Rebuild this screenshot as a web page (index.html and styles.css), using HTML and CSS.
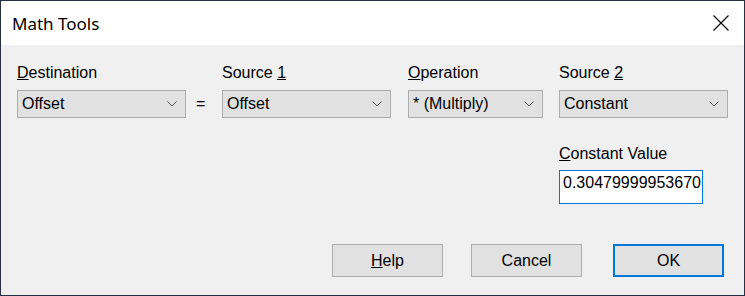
FILE: index.html
```html
<!DOCTYPE html>
<html>
<head>
<meta charset="utf-8">
<link rel="stylesheet" href="styles.css">
</head>
<body>
<div class="window">
  <div class="titlebar">
    <span class="title">Math Tools</span>
    <svg class="close" width="16" height="16" viewBox="0 0 16 16"><path d="M0.5 0.5 L15.5 15.5 M15.5 0.5 L0.5 15.5" stroke="#000" stroke-width="1.1" fill="none"/></svg>
  </div>
  <div class="content">
    <div class="toprow">
      <div class="field w169">
        <div class="label"><u>D</u>estination</div>
        <div class="combo"><span>Offset</span><svg class="chev" width="10" height="6" viewBox="0 0 10 6"><path d="M0.5 0.5 L5 5 L9.5 0.5" stroke="#5a5a5a" fill="none"/></svg></div>
      </div>
      <div class="eq">=</div>
      <div class="field w169">
        <div class="label">Source <u>1</u></div>
        <div class="combo"><span>Offset</span><svg class="chev" width="10" height="6" viewBox="0 0 10 6"><path d="M0.5 0.5 L5 5 L9.5 0.5" stroke="#5a5a5a" fill="none"/></svg></div>
      </div>
      <div class="field w135 sp17">
        <div class="label"><u>O</u>peration</div>
        <div class="combo"><span>* (Multiply)</span><svg class="chev" width="10" height="6" viewBox="0 0 10 6"><path d="M0.5 0.5 L5 5 L9.5 0.5" stroke="#5a5a5a" fill="none"/></svg></div>
      </div>
      <div class="field w169 sp16">
        <div class="label">Source <u>2</u></div>
        <div class="combo"><span>Constant</span><svg class="chev" width="10" height="6" viewBox="0 0 10 6"><path d="M0.5 0.5 L5 5 L9.5 0.5" stroke="#5a5a5a" fill="none"/></svg></div>
        <div class="const">
          <div class="label"><u>C</u>onstant Value</div>
          <div class="textbox">0.30479999953670</div>
        </div>
      </div>
    </div>
    <div class="buttons">
      <button class="btn"><u>H</u>elp</button>
      <button class="btn cancel">Cancel</button>
      <button class="btn ok">OK</button>
    </div>
  </div>
</div>
</body>
</html>
```
FILE: styles.css
```css
html, body {
  margin: 0;
  padding: 0;
  background: #263040;
}
.window {
  width: 745px;
  height: 296px;
  box-sizing: border-box;
  border: 1px solid #263040;
  display: flex;
  flex-direction: column;
  font-family: "Liberation Sans", Arial, sans-serif;
  font-size: 16px;
  color: #000;
}
.titlebar {
  height: 44px;
  flex: none;
  background: #fff;
  display: flex;
  align-items: center;
  padding: 0 15px 0 11px;
}
.title {
  font-family: "Noto Sans", sans-serif;
  font-size: 17px;
  color: #000;
}
.close {
  margin-left: auto;
  display: block;
}
.content {
  flex: 1;
  background: #f0f0f0;
  padding: 19px 15px 18px 16px;
  display: flex;
  flex-direction: column;
}
.toprow {
  display: flex;
  align-items: flex-start;
}
.field {
  display: flex;
  flex-direction: column;
  gap: 8px;
}
.w169 { width: 169px; }
.w135 { width: 135px; }
.sp17 { margin-left: 17px; }
.sp16 { margin-left: 16px; }
.label {
  line-height: 18px;
  height: 18px;
  white-space: nowrap;
}
.combo {
  height: 28px;
  box-sizing: border-box;
  border: 1px solid #adadad;
  background: #e1e1e1;
  display: flex;
  align-items: center;
  justify-content: space-between;
  padding: 0 8px 0 4px;
  white-space: nowrap;
}
.chev {
  display: block;
}
.eq {
  width: 36px;
  box-sizing: border-box;
  margin-top: 26px;
  height: 28px;
  line-height: 28px;
  padding-left: 10px;
}
.const {
  margin-top: 19px;
  display: flex;
  flex-direction: column;
  gap: 7px;
}
.textbox {
  width: 144px;
  height: 34px;
  box-sizing: border-box;
  border: 1px solid #0078d7;
  background: #fff;
  padding: 3px 0 0 3px;
  line-height: 18px;
  white-space: nowrap;
  overflow: hidden;
}
.buttons {
  margin-top: auto;
  margin-right: 5px;
  display: flex;
  justify-content: flex-end;
}
.btn {
  width: 111px;
  height: 33px;
  box-sizing: border-box;
  border: 1px solid #adadad;
  background: #e1e1e1;
  font-family: "Liberation Sans", Arial, sans-serif;
  font-size: 16px;
  color: #000;
  padding: 0;
  margin: 0;
}
.cancel { margin-left: 28px; }
.ok {
  margin-left: 31px;
  border: 2px solid #0078d7;
}
```
